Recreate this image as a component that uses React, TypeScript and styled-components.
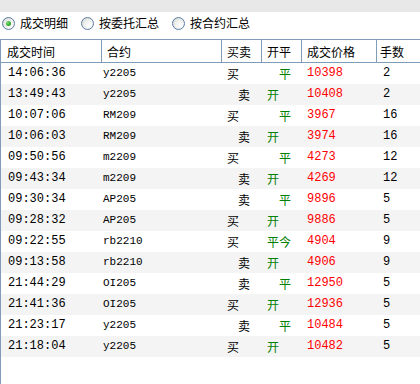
import React from 'react'
import styled, { createGlobalStyle } from 'styled-components'

const GlobalStyle = createGlobalStyle`
  html, body {
    margin: 0;
    padding: 0;
    background: #ffffff;
    overflow: hidden;
  }
  body {
    font-family: "Noto Sans CJK SC", "Liberation Sans", sans-serif;
    font-size: 12px;
    color: #000000;
  }
`

const Page = styled.div`
  width: 420px;
  height: 384px;
  display: flex;
  flex-direction: column;
  background: #ffffff;
`

const TopBand = styled.div`
  height: 12px;
  background: #e8e8e8;
  flex-shrink: 0;
`

const RadioBar = styled.div`
  height: 22px;
  display: flex;
  align-items: center;
  gap: 13px;
  padding-left: 2px;
  margin-bottom: 5px;
  flex-shrink: 0;
`

const RadioLabel = styled.label`
  display: flex;
  align-items: center;
  gap: 5px;
  line-height: 14px;
  cursor: default;
`

const RadioDot = styled.span<{ $checked?: boolean }>`
  width: 13px;
  height: 13px;
  box-sizing: border-box;
  border-radius: 50%;
  border: 1px solid #5a7ea6;
  background: radial-gradient(circle at 65% 65%, #ffffff 0%, #f0f0ee 45%, #cfcfca 100%);
  display: flex;
  align-items: center;
  justify-content: center;

  &::after {
    content: '';
    display: ${(p) => (p.$checked ? 'block' : 'none')};
    width: 5px;
    height: 5px;
    border-radius: 50%;
    background: radial-gradient(circle at 35% 35%, #7fe07f 0%, #2ca82c 60%, #1e7f1e 100%);
  }
`

const Table = styled.div`
  flex: 1;
  border-left: 1px solid #7f9db9;
  display: flex;
  flex-direction: column;
`

const cols = '101px 120px 40px 40px 75px 1fr'

const HeaderRow = styled.div`
  display: grid;
  grid-template-columns: ${cols};
  height: 24px;
  box-sizing: border-box;
  border-top: 1px solid #7f9db9;
  border-bottom: 1px solid #7f9db9;
`

const HeaderCell = styled.div<{ $pad?: number; $last?: boolean }>`
  display: flex;
  align-items: center;
  padding-left: ${(p) => p.$pad ?? 5}px;
  border-right: ${(p) => (p.$last ? 'none' : '1px solid #7f9db9')};
  white-space: nowrap;
`

const Row = styled.div<{ $alt: boolean }>`
  display: grid;
  grid-template-columns: ${cols};
  height: 21px;
  align-items: center;
  background: ${(p) => (p.$alt ? '#f4f4f4' : '#ffffff')};
`

const Cell = styled.div<{ $pad?: number; $color?: string; $mono?: boolean; $small?: boolean }>`
  padding-left: ${(p) => p.$pad ?? 5}px;
  color: ${(p) => p.$color ?? '#000000'};
  font-family: ${(p) =>
    p.$mono ? '"Liberation Mono", "DejaVu Sans Mono", monospace' : '"Noto Sans CJK SC", sans-serif'};
  font-size: ${(p) => (p.$small ? 11 : 12)}px;
  line-height: 21px;
  white-space: nowrap;
`

interface Trade {
  time: string
  code: string
  side: '买' | '卖'
  oc: '开' | '平' | '平今'
  price: number
  qty: number
}

const trades: Trade[] = [
  { time: '14:06:36', code: 'y2205', side: '买', oc: '平', price: 10398, qty: 2 },
  { time: '13:49:43', code: 'y2205', side: '卖', oc: '开', price: 10408, qty: 2 },
  { time: '10:07:06', code: 'RM209', side: '买', oc: '平', price: 3967, qty: 16 },
  { time: '10:06:03', code: 'RM209', side: '卖', oc: '开', price: 3974, qty: 16 },
  { time: '09:50:56', code: 'm2209', side: '买', oc: '平', price: 4273, qty: 12 },
  { time: '09:43:34', code: 'm2209', side: '卖', oc: '开', price: 4269, qty: 12 },
  { time: '09:30:34', code: 'AP205', side: '卖', oc: '平', price: 9896, qty: 5 },
  { time: '09:28:32', code: 'AP205', side: '买', oc: '开', price: 9886, qty: 5 },
  { time: '09:22:55', code: 'rb2210', side: '买', oc: '平今', price: 4904, qty: 9 },
  { time: '09:13:58', code: 'rb2210', side: '卖', oc: '开', price: 4906, qty: 9 },
  { time: '21:44:29', code: 'OI205', side: '卖', oc: '平', price: 12950, qty: 5 },
  { time: '21:41:36', code: 'OI205', side: '买', oc: '开', price: 12936, qty: 5 },
  { time: '21:23:17', code: 'y2205', side: '卖', oc: '平', price: 10484, qty: 5 },
  { time: '21:18:04', code: 'y2205', side: '买', oc: '开', price: 10482, qty: 5 },
]

const App: React.FC = () => {
  return (
    <Page>
      <GlobalStyle />
      <TopBand />
      <RadioBar>
        <RadioLabel>
          <RadioDot $checked />
          成交明细
        </RadioLabel>
        <RadioLabel>
          <RadioDot />
          按委托汇总
        </RadioLabel>
        <RadioLabel>
          <RadioDot />
          按合约汇总
        </RadioLabel>
      </RadioBar>
      <Table>
        <HeaderRow>
          <HeaderCell $pad={6}>成交时间</HeaderCell>
          <HeaderCell>合约</HeaderCell>
          <HeaderCell>买卖</HeaderCell>
          <HeaderCell>开平</HeaderCell>
          <HeaderCell>成交价格</HeaderCell>
          <HeaderCell $pad={3} $last>
            手数
          </HeaderCell>
        </HeaderRow>
        {trades.map((t, i) => (
          <Row key={t.time} $alt={i % 2 === 1}>
            <Cell $pad={7} $mono>
              {t.time}
            </Cell>
            <Cell $pad={1} $mono $small>
              {t.code}
            </Cell>
            <Cell $pad={t.side === '卖' ? 16 : 5}>{t.side}</Cell>
            <Cell $pad={t.oc === '平' ? 17 : 5} $color='#008000'>
              {t.oc}
            </Cell>
            <Cell $pad={5} $color='#ff0000' $mono>
              {t.price}
            </Cell>
            <Cell $pad={6} $mono>
              {t.qty}
            </Cell>
          </Row>
        ))}
      </Table>
    </Page>
  )
}

export default App
